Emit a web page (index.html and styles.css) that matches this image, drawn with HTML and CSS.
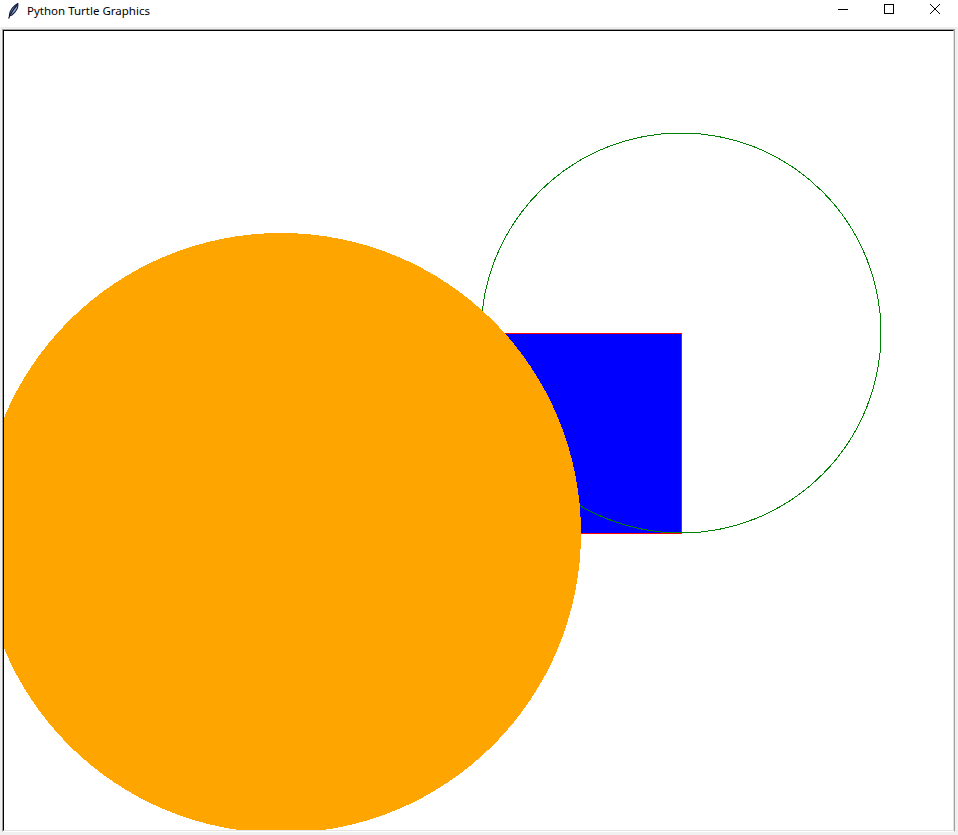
FILE: index.html
```html
<!DOCTYPE html>
<html>
<head>
<meta charset="utf-8">
<link rel="stylesheet" href="styles.css">
<title>Python Turtle Graphics</title>
</head>
<body>
<div class="window">
  <div class="titlebar">
    <div class="title-left">
      <svg class="feather" width="12" height="16" viewBox="0 0 12 16">
        <path d="M10.8 0.6 C11.4 4.5 8.8 9 4.6 12.2 L2.4 12.6 C2.8 7.8 6.2 3.2 10.8 0.6 Z" fill="#8fa3cf" stroke="#101a3a" stroke-width="1.1"/>
        <path d="M10 2 C7.2 5 4.8 8.5 2.6 13.2 L1.6 15.4" fill="none" stroke="#101a3a" stroke-width="1.2"/>
      </svg>
      <span class="title-text">Python Turtle Graphics</span>
    </div>
    <div class="controls">
      <div class="ctl">
        <svg width="10" height="10" viewBox="0 0 10 10"><path d="M0 5.5 H10" stroke="#000" stroke-width="1"/></svg>
      </div>
      <div class="ctl">
        <svg width="10" height="10" viewBox="0 0 10 10"><rect x="0.5" y="0.5" width="9" height="9" fill="none" stroke="#000" stroke-width="1"/></svg>
      </div>
      <div class="ctl">
        <svg width="10" height="10" viewBox="0 0 10 10"><path d="M0 0 L10 10 M10 0 L0 10" stroke="#000" stroke-width="1"/></svg>
      </div>
    </div>
  </div>
  <div class="frame">
    <div class="canvas-outer">
      <div class="canvas-inner">
        <svg class="drawing" width="949" height="799" viewBox="4 31 949 799" shape-rendering="crispEdges">
          <rect x="481.5" y="333.5" width="200" height="200" fill="#0000ff" stroke="#ff0000" stroke-width="1"/>
          <circle cx="681" cy="333" r="200" fill="none" stroke="#008000" stroke-width="1"/>
          <circle cx="281" cy="533" r="300" fill="#ffa500"/>
        </svg>
      </div>
    </div>
  </div>
</div>
</body>
</html>
```

FILE: styles.css
```css
html, body {
  margin: 0;
  padding: 0;
  background: #f0f0f0;
  width: 958px;
  height: 835px;
  overflow: hidden;
}

.window {
  width: 958px;
  height: 835px;
  display: flex;
  flex-direction: column;
}

.titlebar {
  height: 27px;
  background: #ffffff;
  display: flex;
  justify-content: space-between;
  align-items: stretch;
  flex: none;
}

.title-left {
  display: flex;
  align-items: center;
  padding-left: 7px;
}

.feather {
  display: block;
  margin-top: -5px;
}

.title-text {
  font-family: "Noto Sans", "Liberation Sans", Arial, sans-serif;
  font-size: 11.5px;
  color: #000;
  margin-left: 8px;
  margin-top: -6px;
}

.controls {
  display: flex;
}

.ctl {
  width: 46px;
  display: flex;
  align-items: center;
  justify-content: center;
  padding-bottom: 9px;
}

.ctl svg {
  display: block;
}

.frame {
  flex: 1;
  padding: 2px 3px 3px 2px;
  display: flex;
}

.canvas-outer {
  border-style: solid;
  border-width: 1px;
  border-color: #a0a0a0 #a0a0a0 #ffffff #a0a0a0;
  display: flex;
}

.canvas-inner {
  border-style: solid;
  border-width: 1px;
  border-color: #000000 #e3e3e3 #e3e3e3 #000000;
  background: #ffffff;
  overflow: hidden;
  display: flex;
}

.drawing {
  display: block;
}
```
